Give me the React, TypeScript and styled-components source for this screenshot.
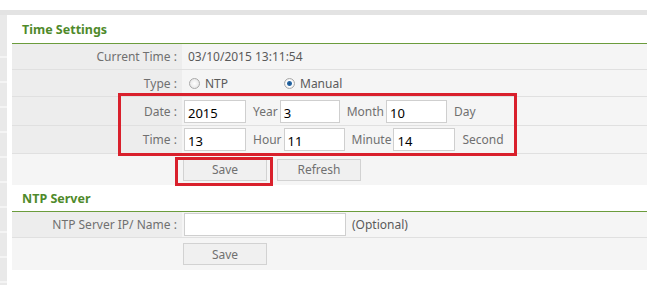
import React from "react";
import styled, { createGlobalStyle } from "styled-components";

const GlobalStyle = createGlobalStyle`
  body {
    margin: 0;
    background: #ffffff;
    font-family: "Noto Sans", "Liberation Sans", Arial, sans-serif;
  }
`;

const Page = styled.div`
  width: 647px;
  height: 285px;
  overflow: hidden;
  background: #ffffff;
  position: relative;
`;

const TopGap = styled.div`
  height: 10px;
  background: #ffffff;
`;

const TopBand = styled.div`
  height: 5px;
  background: #e3e3e3;
`;

const Body = styled.div`
  display: flex;
  height: 270px;
`;

const Sidebar = styled.div`
  width: 7px;
  background: repeating-linear-gradient(
    to bottom,
    #e9e9e9 0px,
    #e9e9e9 23px,
    #f4f4f4 23px,
    #f4f4f4 25px
  );
  background-position: 0 18px;
`;

const Main = styled.div`
  flex: 1;
  padding-left: 5px;
  position: relative;
`;

const SectionTitle = styled.div<{ $h: number }>`
  height: ${(p) => p.$h}px;
  display: flex;
  align-items: center;
  padding-left: 10px;
  color: #4f8a2b;
  font-weight: bold;
  font-size: 12.5px;
  border-bottom: 1px solid #6b9c3c;
  box-sizing: border-box;
`;

const Row = styled.div<{ $h: number }>`
  display: flex;
  height: ${(p) => p.$h}px;
  border-bottom: 1px solid #e0e0e0;
  box-shadow: inset 0 -1px 0 #fafafa;
  box-sizing: border-box;
`;

const Label = styled.div`
  width: 170px;
  flex: none;
  background: #ededed;
  color: #707070;
  font-size: 12px;
  display: flex;
  align-items: center;
  justify-content: flex-end;
  padding-right: 2px;
  box-sizing: border-box;
  white-space: pre;
`;

const Value = styled.div`
  flex: 1;
  background: #f5f5f5;
  color: #5a5a5a;
  font-size: 12px;
  display: flex;
  align-items: center;
  padding-left: 2px;
  white-space: pre;
`;

const ButtonRow = styled.div<{ $h: number }>`
  display: flex;
  align-items: center;
  height: ${(p) => p.$h}px;
  background: #f5f5f5;
  padding-left: 171px;
  gap: 10px;
`;

const Text = styled.span<{ $ml?: number }>`
  margin-left: ${(p) => p.$ml ?? 0}px;
`;

const FieldText = styled.span`
  margin-left: 7px;
  margin-right: 2px;
  color: #707070;
`;

const Input = styled.div<{ $w?: number }>`
  width: ${(p) => p.$w ?? 62}px;
  height: 23px;
  background: #ffffff;
  border: 1px solid #cfcfcf;
  box-sizing: border-box;
  color: #000000;
  font-size: 13px;
  line-height: 23px;
  padding-left: 3px;
  padding-top: 1px;
`;

const Radio = styled.span<{ $checked?: boolean }>`
  display: inline-block;
  width: 9px;
  height: 9px;
  border-radius: 50%;
  border: 1px solid #a9a9a9;
  background: ${(p) =>
    p.$checked
      ? "radial-gradient(circle, #1c4f80 0, #2a6aa8 2px, #ffffff 3px, #e8e8e8 5px)"
      : "radial-gradient(circle, #ffffff 0, #e6e6e6 5px)"};
  margin-right: 5px;
`;

const RadioItem = styled.span<{ $w?: number }>`
  display: inline-flex;
  align-items: center;
  width: ${(p) => p.$w ?? 90}px;
  margin-left: 5px;
`;

const Button = styled.div`
  width: 84px;
  height: 22px;
  background: #f0f0f0;
  border: 1px solid #d2d2d2;
  box-sizing: border-box;
  color: #707070;
  font-size: 12px;
  display: flex;
  align-items: center;
  justify-content: center;
`;

const Gap = styled.div<{ $h: number }>`
  height: ${(p) => p.$h}px;
`;

// red annotation frames drawn over the form
const RedBox = styled.div<{ $x: number; $y: number; $w: number; $h: number }>`
  position: absolute;
  left: ${(p) => p.$x}px;
  top: ${(p) => p.$y}px;
  width: ${(p) => p.$w}px;
  height: ${(p) => p.$h}px;
  border: 3px solid #d9202c;
  box-sizing: border-box;
  pointer-events: none;
`;

export default function App() {
  return (
    <>
      <GlobalStyle />
      <Page>
        <TopGap />
        <TopBand />
        <Body>
          <Sidebar />
          <Main>
            <SectionTitle $h={29}>Time Settings</SectionTitle>
            <Row $h={26}>
              <Label>Current Time : </Label>
              <Value>
                <Text $ml={4}>03/10/2015 13:11:54</Text>
              </Value>
            </Row>
            <Row $h={27}>
              <Label>Type : </Label>
              <Value>
                <RadioItem $w={90}>
                  <Radio />
                  NTP
                </RadioItem>
                <RadioItem>
                  <Radio $checked />
                  Manual
                </RadioItem>
              </Value>
            </Row>
            <Row $h={29}>
              <Label>Date : </Label>
              <Value>
                <Input>2015</Input>
                <FieldText>Year</FieldText>
                <Input $w={60}>3</Input>
                <FieldText>Month</FieldText>
                <Input $w={61}>10</Input>
                <FieldText>Day</FieldText>
              </Value>
            </Row>
            <Row $h={28}>
              <Label>Time : </Label>
              <Value>
                <Input>13</Input>
                <FieldText>Hour</FieldText>
                <Input $w={61}>11</Input>
                <FieldText>Minute</FieldText>
                <Input $w={62}>14</Input>
                <FieldText>Second</FieldText>
              </Value>
            </Row>
            <ButtonRow $h={31}>
              <Button>Save</Button>
              <Button>Refresh</Button>
            </ButtonRow>
            <SectionTitle $h={27}>NTP Server</SectionTitle>
            <Row $h={26}>
              <Label>NTP Server IP/ Name : </Label>
              <Value>
                <Input $w={162} />
                <Text $ml={6}>(Optional)</Text>
              </Value>
            </Row>
            <ButtonRow $h={32}>
              <Button>Save</Button>
            </ButtonRow>
            <Gap $h={15} />
          </Main>
        </Body>
        <RedBox $x={118} $y={93} $w={399} $h={63} />
        <RedBox $x={175} $y={157} $w={98} $h={29} />
      </Page>
    </>
  );
}
